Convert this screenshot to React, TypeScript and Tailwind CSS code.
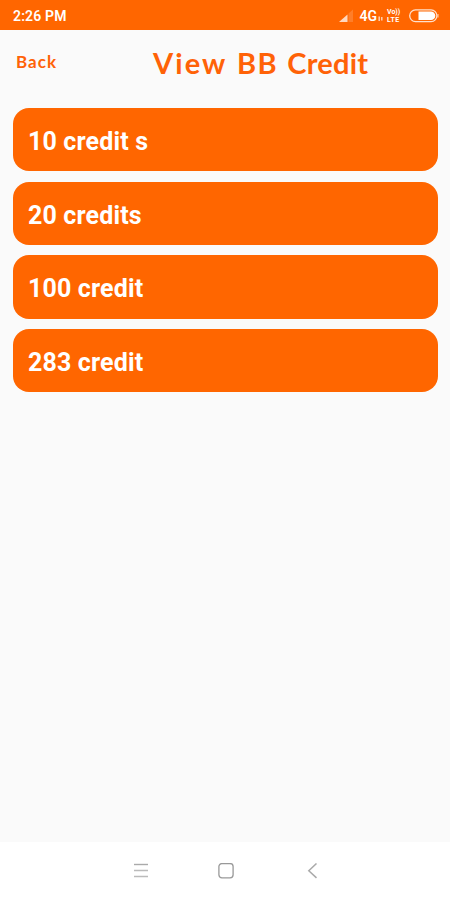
const credits = ['10 credit s', '20 credits', '100 credit', '283 credit'];

// Signal, network type and battery on the right of the status bar
function StatusIcons() {
  return (
    <div className="flex items-center text-white">
      <svg width="17" height="14" viewBox="0 0 17 14">
        <path d="M8.500 5.500v7.500H0z" fill="#fff" fillOpacity="0.75" />
        <path d="M9.500 4.500L14 0.500V13H9.500z" fill="#fff" fillOpacity="0.16" />
      </svg>
      <span className="ml-[3px] text-[14px] leading-none font-semibold">4G</span>
      <svg width="6" height="6" viewBox="0 0 6 6" className="mt-1.5 ml-px">
        <path d="M1.200 0.500v4.500M3.800 1v3.500" stroke="#fff" strokeOpacity="0.7" strokeWidth="1.500" />
      </svg>
      <div className="ml-[3px] flex w-[15px] flex-col text-[7px] leading-[8px] font-bold whitespace-nowrap">
        <span>Vo))</span>
        <span className="tracking-[0.5px]">LTE</span>
      </div>
      <svg width="30" height="14" viewBox="0 0 30 14" className="ml-[7px]">
        <rect x="0.700" y="0.900" width="27.200" height="11.700" rx="5.800" fill="none" stroke="#fff" strokeOpacity="0.8" strokeWidth="1.300" />
        <path d="M9.500 2.500H22a4.300 4.300 0 0 1 0 8.600H9.500z" fill="#fff" />
        <path d="M29 5v3.500" stroke="#fff" strokeOpacity="0.7" />
      </svg>
    </div>
  );
}

function StatusBar() {
  return (
    <div className="flex h-[30px] items-center justify-between bg-[#ff6600] pt-0.5 pr-[11px] pl-[13px]">
      <span className="text-[14px] leading-none font-semibold tracking-[0.15px] text-white">2:26 PM</span>
      <StatusIcons />
    </div>
  );
}

function Header() {
  return (
    <header className="flex h-[78px] items-start pl-4 font-['Lato',sans-serif] text-[#ff6207]">
      <button className="mt-[22px] w-[137px] text-left text-[17px] leading-5 font-bold tracking-[1px]">Back</button>
      <h1 className="mt-[15px] text-[29px] leading-9 font-bold tracking-[1.4px] [word-spacing:1px] whitespace-nowrap">
        <span className="tracking-[2.1px]">View</span> BB <span className="tracking-[0.2px]">Credit</span>
      </h1>
    </header>
  );
}

// Android navigation buttons
function NavBar() {
  return (
    <nav className="flex h-[58px] items-center bg-white pl-[133px]">
      <button className="mr-[69px]">
        <svg width="16" height="16" viewBox="0 0 16 16" fill="none" strokeWidth="1.4">
          <path d="M1 1.500h14" stroke="#aaa" />
          <path d="M1 7.500h14M1 13.500h14" stroke="#bbb" />
        </svg>
      </button>
      <button className="mr-[71px]">
        <svg width="16" height="16" viewBox="0 0 16 16" fill="none">
          <rect x="0.900" y="0.600" width="14.200" height="14.200" rx="3" stroke="#999" strokeWidth="1.3" />
        </svg>
      </button>
      <button>
        <svg width="16" height="16" viewBox="0 0 16 16" fill="none">
          <path d="M11.500 0.500L3.800 7.700l7.700 7.200" stroke="#aaa" strokeWidth="1.5" />
        </svg>
      </button>
    </nav>
  );
}

export default function App() {
  return (
    <div className="flex h-[900px] w-[450px] flex-col overflow-hidden bg-[#fafafa] font-['Roboto',sans-serif]">
      <StatusBar />
      <Header />
      <main className="flex flex-1 flex-col gap-[10.5px] pr-3 pl-[13px]">
        {credits.map((credit) => (
          <div
            key={credit}
            className="flex h-[63.2px] items-center rounded-[16px] bg-[#ff6600] pt-1 pl-[15px] text-[25px] font-bold tracking-[0.15px] text-white"
          >
            {credit}
          </div>
        ))}
      </main>
      <NavBar />
    </div>
  );
}
